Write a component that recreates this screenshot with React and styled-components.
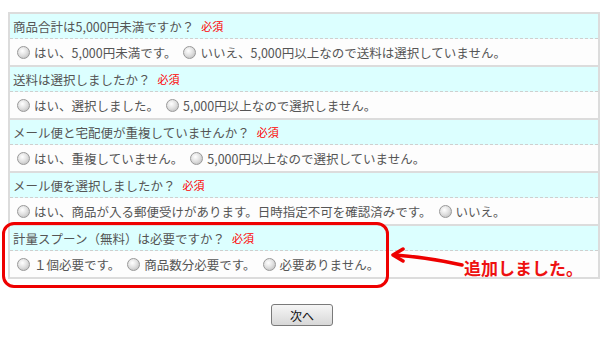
import React from 'react';
import styled, { createGlobalStyle } from 'styled-components';

const GlobalStyle = createGlobalStyle`
  body {
    margin: 0;
    background: #fff;
    font-family: "Noto Sans CJK JP", "Noto Sans", sans-serif;
  }
`;

const Page = styled.div`
  width: 604px;
  height: 360px;
  padding: 12px 4px 0 8px;
  box-sizing: border-box;
  position: relative;
`;

const Table = styled.div`
  border: 2px solid #dcdcdc;
  border-bottom: none;
`;

const Question = styled.div`
  height: 24px;
  display: flex;
  align-items: center;
  padding-left: 3px;
  background: #dcffff;
  border-bottom: 1px dashed #cfcfcf;
  color: #555;
  font-size: 12.5px;
`;

const Required = styled.span`
  color: #f00;
  font-size: 11px;
  margin-left: 7px;
`;

const Answer = styled.div`
  height: 26px;
  display: flex;
  align-items: center;
  padding-left: 7px;
  background: #fdfdfd;
  border-bottom: 2px solid #dcdcdc;
  color: #555;
  font-size: 12.5px;
`;

const Option = styled.label`
  display: flex;
  align-items: center;
  margin-right: 7px;
  white-space: nowrap;
`;

const Radio = styled.span`
  width: 11px;
  height: 11px;
  border-radius: 50%;
  border: 1px solid #999;
  background: radial-gradient(circle at 40% 35%, #ffffff 0%, #e2e2e2 45%, #b5b5b5 100%);
  margin-right: 4px;
  box-sizing: content-box;
`;

const Footer = styled.div`
  display: flex;
  justify-content: center;
  padding-top: 25px;
  padding-right: 4px;
`;

const Button = styled.button`
  width: 62px;
  height: 22px;
  font-family: "Noto Sans CJK JP", sans-serif;
  font-size: 12px;
  color: #111;
  border: 1px solid #7a7a7a;
  border-radius: 3px;
  background: linear-gradient(#f6f6f6, #d8d8d8);
  padding: 0;
`;

const Highlight = styled.div`
  position: absolute;
  left: 2px;
  top: 222px;
  width: 381px;
  height: 60px;
  border: 3px solid #ee0000;
  border-radius: 12px;
`;

const Arrow = styled.svg`
  position: absolute;
  left: 389px;
  top: 244px;
`;

const Note = styled.div`
  position: absolute;
  left: 464px;
  top: 256px;
  color: #ee1111;
  font-size: 17px;
  font-weight: bold;
  line-height: 24px;
`;

const questions = [
  { q: '商品合計は5,000円未満ですか？', a: ['はい、5,000円未満です。', 'いいえ、5,000円以上なので送料は選択していません。'] },
  { q: '送料は選択しましたか？', a: ['はい、選択しました。', '5,000円以上なので選択しません。'] },
  { q: 'メール便と宅配便が重複していませんか？', a: ['はい、重複していません。', '5,000円以上なので選択していません。'] },
  { q: 'メール便を選択しましたか？', a: ['はい、商品が入る郵便受けがあります。日時指定不可を確認済みです。', 'いいえ。'] },
  { q: '計量スプーン（無料）は必要ですか？', a: ['１個必要です。', '商品数分必要です。', '必要ありません。'] },
];

const App = () => (
  <Page>
    <GlobalStyle />
    <Table>
      {questions.map((item, i) => (
        <React.Fragment key={i}>
          <Question>
            {item.q}
            <Required>必須</Required>
          </Question>
          <Answer>
            {item.a.map((text, j) => (
              <Option key={j}>
                <Radio />
                {text}
              </Option>
            ))}
          </Answer>
        </React.Fragment>
      ))}
    </Table>
    <Footer>
      <Button>次へ</Button>
    </Footer>
    <Highlight />
    <Arrow width="76" height="26" viewBox="0 0 76 26">
      <path d="M73 21 C55 17 35 13 6 11" fill="none" stroke="#ee0000" strokeWidth="3.5" strokeLinecap="round" />
      <path d="M14 5 L4 11 L14 17" fill="none" stroke="#ee0000" strokeWidth="3.5" strokeLinecap="round" strokeLinejoin="round" />
    </Arrow>
    <Note>追加しました。</Note>
  </Page>
);

export default App;
